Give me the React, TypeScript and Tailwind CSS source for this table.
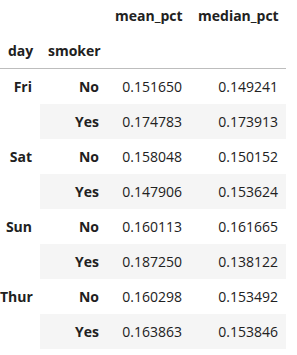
import { Fragment } from "react";

const rows = [
  { day: "Fri", no: ["0.151650", "0.149241"], yes: ["0.174783", "0.173913"] },
  { day: "Sat", no: ["0.158048", "0.150152"], yes: ["0.147906", "0.153624"] },
  { day: "Sun", no: ["0.160113", "0.161665"], yes: ["0.187250", "0.138122"] },
  { day: "Thur", no: ["0.160298", "0.153492"], yes: ["0.163863", "0.153846"] },
];

const cell = "px-2 py-[7px] text-right align-middle";

export default function App() {
  return (
    <div className="w-[297px] h-[355px] bg-white overflow-hidden text-[14px] leading-[21px] text-[#212121] font-['Open_Sans',sans-serif]">
      <table className="table-fixed border-separate border-spacing-0 w-[286px]">
        <colgroup>
          <col className="w-[40px]" />
          <col className="w-[67px]" />
          <col className="w-[83px]" />
          <col className="w-[96px]" />
        </colgroup>
        <thead>
          <tr>
            <th className="px-2 pt-[5px] pb-[7px]"></th>
            <th className="px-2 pt-[5px] pb-[7px]"></th>
            <th className="px-2 pt-[5px] pb-[7px] text-right font-bold">mean_pct</th>
            <th className="px-2 pt-[5px] pb-[7px] text-right font-bold">median_pct</th>
          </tr>
          <tr>
            <th className={`${cell} font-bold border-b border-[#bdbdbd]`}>day</th>
            <th className={`${cell} font-bold border-b border-[#bdbdbd]`}>smoker</th>
            <th className={`${cell} border-b border-[#bdbdbd]`}></th>
            <th className={`${cell} border-b border-[#bdbdbd]`}></th>
          </tr>
        </thead>
        <tbody>
          {rows.map((r) => (
            <Fragment key={r.day}>
              <tr>
                <th rowSpan={2} className="pl-0 pr-2 py-[7px] text-right align-top font-bold bg-white">
                  {r.day}
                </th>
                <th className={`${cell} font-bold`}>No</th>
                <td className={cell}>{r.no[0]}</td>
                <td className={cell}>{r.no[1]}</td>
              </tr>
              <tr className="bg-[#f5f5f5]">
                <th className={`${cell} font-bold`}>Yes</th>
                <td className={cell}>{r.yes[0]}</td>
                <td className={cell}>{r.yes[1]}</td>
              </tr>
            </Fragment>
          ))}
        </tbody>
      </table>
    </div>
  );
}
